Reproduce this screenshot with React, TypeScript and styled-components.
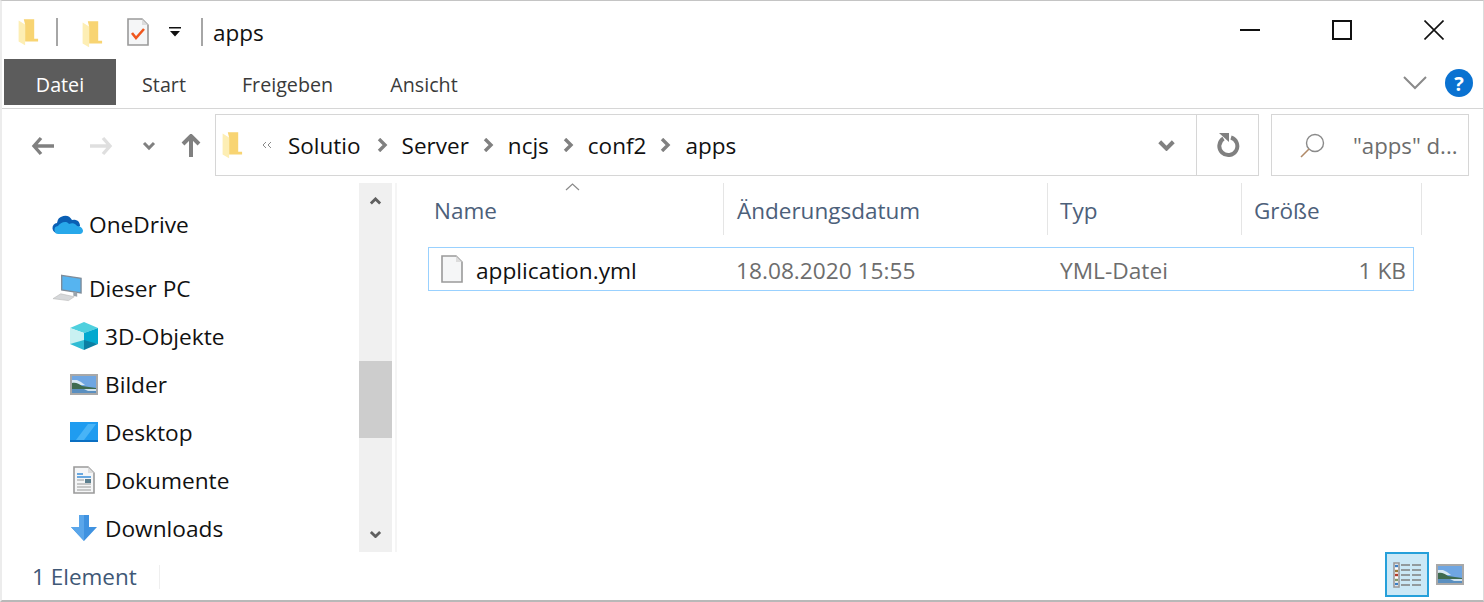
import React from "react";
import styled, { createGlobalStyle } from "styled-components";

const GlobalStyle = createGlobalStyle`
  html, body { margin: 0; padding: 0; background: #fff; }
  body { font-family: "Open Sans", "Noto Sans", sans-serif; }
  * { box-sizing: border-box; }
`;

// Fenster
const Window = styled.div`
  width: 1484px;
  height: 602px;
  background: #fff;
  border-top: 1px solid #c4c4c4;
  border-bottom: 2px solid #b8b8b8;
  border-left: 2px solid #ececec;
  border-right: 1px solid #dcdcdc;
  display: flex;
  flex-direction: column;
  overflow: hidden;
`;

const TitleBar = styled.div`
  height: 57px;
  display: flex;
  align-items: center;
  padding-left: 14px;
  flex-shrink: 0;
`;

const QuickBar = styled.div`
  display: flex;
  align-items: center;
  flex: 1;
  margin-top: 5px;
`;

const VSep = styled.span`
  width: 2px;
  height: 28px;
  background: #a6a6a6;
`;

const Slot = styled.span<{ $w: number; $dy?: number }>`
  width: ${p => p.$w}px;
  display: flex;
  justify-content: center;
  align-items: center;
  padding-top: ${p => p.$dy ?? 0}px;
`;

const TitleText = styled.span`
  font-size: 22.5px;
  color: #111;
  margin-left: 10px;
`;

const WinButtons = styled.div`
  display: flex;
  align-items: center;
  padding-right: 39px;
  gap: 72px;
`;

const TabBar = styled.div`
  height: 51px;
  display: flex;
  align-items: flex-start;
  border-bottom: 1px solid #d6d6d6;
  padding-left: 2px;
  padding-top: 1px;
  flex-shrink: 0;
`;

const Tab = styled.div<{ $active?: boolean; $w: number }>`
  width: ${p => p.$w}px;
  height: 46px;
  display: flex;
  align-items: center;
  justify-content: center;
  padding-top: 4px;
  font-size: 19.7px;
  color: ${p => (p.$active ? "#fff" : "#3a3a3a")};
  background: ${p => (p.$active ? "#5c5c5c" : "transparent")};
`;

const TabEnd = styled.div`
  margin-left: auto;
  height: 46px;
  display: flex;
  align-items: center;
  gap: 18px;
  padding-right: 10px;
  padding-top: 2px;
`;

const HelpDot = styled.span`
  width: 28px;
  height: 28px;
  border-radius: 50%;
  background: #0a72d1;
  color: #fff;
  font-size: 20px;
  font-weight: 700;
  display: flex;
  align-items: center;
  justify-content: center;
`;

const NavBar = styled.div`
  height: 71px;
  display: flex;
  padding-top: 5px;
  flex-shrink: 0;
`;

const NavButtons = styled.div`
  width: 213px;
  height: 64px;
  display: flex;
  align-items: center;
  padding-left: 29px;
`;

const AddressBox = styled.div`
  width: 1044px;
  height: 62px;
  border: 1px solid #d6d6d6;
  display: flex;
  align-items: center;
`;

const Crumbs = styled.div`
  flex: 1;
  display: flex;
  align-items: center;
  padding-left: 4px;
  font-size: 22.5px;
  color: #111;
`;

const Crumb = styled.span<{ $gap?: number }>`
  margin-right: ${p => p.$gap ?? 14}px;
`;

const CrumbArrow = styled.span`
  display: flex;
  margin-right: 14px;
`;

const DropZone = styled.div`
  width: 60px;
  display: flex;
  justify-content: center;
`;

const RefreshZone = styled.div`
  width: 62px;
  height: 100%;
  border-left: 1px solid #d6d6d6;
  display: flex;
  align-items: center;
  justify-content: center;
`;

const SearchBox = styled.div`
  width: 198px;
  height: 62px;
  margin-left: 12px;
  border: 1px solid #d6d6d6;
  display: flex;
  align-items: center;
  padding-left: 28px;
  gap: 28px;
  font-size: 22.2px;
  color: #6d6d6d;
  white-space: nowrap;
`;

const Body = styled.div`
  flex: 1;
  display: flex;
  padding-top: 3px;
  min-height: 0;
`;

const Sidebar = styled.div`
  width: 357px;
  padding: 17px 0 0 48px;
  overflow: hidden;
`;

const NavGroup = styled.div`
  margin-bottom: 16px;
`;

const NavRow = styled.div<{ $child?: boolean }>`
  height: 48px;
  display: flex;
  align-items: center;
  font-size: 22.7px;
  color: #111;
  padding-left: ${p => (p.$child ? 18 : 2)}px;
`;

const NavIcon = styled.span<{ $pad?: number }>`
  width: 37px;
  display: flex;
  align-items: center;
  flex-shrink: 0;
  padding-left: ${p => p.$pad ?? 0}px;
`;

const ScrollBar = styled.div`
  width: 33px;
  background: #f0f0f0;
  display: flex;
  flex-direction: column;
  justify-content: space-between;
  align-items: center;
  position: relative;
`;

const ScrollArrow = styled.div`
  height: 36px;
  display: flex;
  align-items: center;
  justify-content: center;
`;

const ScrollThumb = styled.div`
  position: absolute;
  top: 178px;
  left: 0;
  right: 0;
  height: 77px;
  background: #cdcdcd;
`;

const SideEdge = styled.div`
  width: 2px;
  margin-left: 3px;
  background: #f5f5f5;
`;

const Content = styled.div`
  flex: 1;
  padding-left: 31px;
  position: relative;
`;

const SortArrow = styled.div`
  position: absolute;
  left: 168px;
  top: 0;
  display: flex;
`;

const ColumnHeader = styled.div`
  display: grid;
  grid-template-columns: 296px 324px 194px 180px;
  height: 52px;
`;

const HeadCell = styled.div<{ $pad: number }>`
  display: flex;
  align-items: center;
  padding: 3px 0 0 ${p => p.$pad}px;
  font-size: 22.5px;
  color: #4c607a;
  border-right: 1px solid #e5e5e5;
`;

const FileRow = styled.div`
  margin-top: 12px;
  width: 986px;
  height: 44px;
  border: 1px solid #99d1ff;
  display: grid;
  grid-template-columns: 295px 324px 194px 1fr;
  align-items: center;
  padding-top: 3px;
  font-size: 22.7px;
  color: #6d6d6d;
`;

const FileName = styled.div`
  display: flex;
  align-items: center;
  padding-left: 12px;
  gap: 13px;
  color: #111;
`;

const FileGlyph = styled.span`
  display: flex;
  margin-top: -3px;
`;

const DateCell = styled.div`
  padding-left: 12px;
`;

const SizeCell = styled.div`
  text-align: right;
  padding-right: 7px;
`;

const StatusBar = styled.div`
  height: 48px;
  display: flex;
  align-items: flex-start;
  font-size: 22.5px;
  color: #3f5876;
  padding-left: 30px;
  flex-shrink: 0;
`;

const StatusText = styled.span`
  width: 128px;
  margin-top: 13px;
  border-right: 1px solid #efefef;
  line-height: 24px;
  height: 24px;
  display: flex;
  align-items: center;
`;

const ViewButtons = styled.div`
  margin-left: auto;
  display: flex;
  align-items: center;
  gap: 7px;
  padding-right: 19px;
  height: 45px;
`;

const ViewActive = styled.div`
  width: 44px;
  height: 45px;
  border: 2px solid #26a0da;
  background: #cbe8f6;
  display: flex;
  align-items: center;
  justify-content: center;
`;

const Folder = () => (
  <svg width={26} height={28.6} viewBox="0 0 20 22">
    <path d="M6 1h8v15h3v2H7V5z" fill="#f8d472" />
    <path d="M2 2l5 3v16l-5-3z" fill="#fdeeb4" />
  </svg>
);

const Landscape = () => (
  <svg width={28} height={21} viewBox="0 0 28 21">
    <rect x="1" y="1" width="26" height="19" fill="#6fa6e2" stroke="#a8a8a8" strokeWidth="2" />
    <path d="M2 6h5l4 2 4 3H2z" fill="#d9e9f5" />
    <path d="M2 9c4-1 7 1 10 3l14 2v1H2z" fill="#3f6b4f" />
    <rect x="2" y="15" width="24" height="4" fill="#5a8fc0" />
    <path d="M14 15h12v2H18z" fill="#cfe2ef" />
  </svg>
);

const Chevron = ({ dir, color = "#808080", w = 14 }: { dir: "up" | "down"; color?: string; w?: number }) => (
  <svg width={w} height={w * 0.65} viewBox="0 0 14 9">
    <path
      d={dir === "down" ? "M2 2l5 5 5-5" : "M2 7l5-5 5 5"}
      fill="none"
      stroke={color}
      strokeWidth="3"
    />
  </svg>
);

const BackArrow = ({ color }: { color: string }) => (
  <svg width="24" height="20" viewBox="0 0 24 20">
    <path d="M10 2L3 10l7 8M3 10h20" fill="none" stroke={color} strokeWidth="3.4" />
  </svg>
);

const ForwardArrow = ({ color }: { color: string }) => (
  <svg width="24" height="20" viewBox="0 0 24 20">
    <path d="M14 2l7 8-7 8M21 10H1" fill="none" stroke={color} strokeWidth="3.4" />
  </svg>
);

const CrumbChevron = () => (
  <svg width="11" height="14" viewBox="0 0 11 14">
    <path d="M2 1l6 6-6 6" fill="none" stroke="#808080" strokeWidth="3.4" />
  </svg>
);

const FileIcon = ({ children }: { children?: React.ReactNode }) => (
  <svg width="22" height="28" viewBox="0 0 22 28">
    <path d="M1 1h14l6 6v20H1z" fill="#f5f6f7" stroke="#9a9a9a" strokeWidth="1.6" />
    <path d="M15 1v6h6z" fill="#dcdcdc" />
    {children}
  </svg>
);

const App: React.FC = () => (
  <>
    <GlobalStyle />
    <Window>
      <TitleBar>
        <QuickBar>
          <Slot $w={26}><Folder /></Slot>
          <Slot $w={14} />
          <VSep />
          <Slot $w={22} />
          <Slot $w={26} $dy={4}><Folder /></Slot>
          <Slot $w={21} />
          <Slot $w={22}>
            <FileIcon>
              <path d="M5 15l4 5 8-9" fill="none" stroke="#f0561d" strokeWidth="2.6" />
            </FileIcon>
          </Slot>
          <Slot $w={20} />
          <Slot $w={12}>
            <svg width="12" height="10" viewBox="0 0 12 10">
              <path d="M0 0h12v1.6H0zM1 4h10L6 9.5z" fill="#111" />
            </svg>
          </Slot>
          <Slot $w={20} />
          <VSep />
          <TitleText>apps</TitleText>
        </QuickBar>
        <WinButtons>
          <svg width="20" height="20" viewBox="0 0 20 20"><path d="M0 10h20" stroke="#111" strokeWidth="2" /></svg>
          <svg width="20" height="20" viewBox="0 0 20 20"><rect x="1" y="1" width="18" height="18" fill="none" stroke="#111" strokeWidth="2" /></svg>
          <svg width="20" height="20" viewBox="0 0 20 20"><path d="M0.5 0.5l19 19M19.5 0.5l-19 19" stroke="#111" strokeWidth="1.6" /></svg>
        </WinButtons>
      </TitleBar>

      <TabBar>
        <Tab $active $w={112}>Datei</Tab>
        <Tab $w={96}>Start</Tab>
        <Tab $w={151}>Freigeben</Tab>
        <Tab $w={122}>Ansicht</Tab>
        <TabEnd>
          <svg width="24" height="14" viewBox="0 0 24 14">
            <path d="M1 1l11 11L23 1" fill="none" stroke="#8a8a8a" strokeWidth="2" />
          </svg>
          <HelpDot>?</HelpDot>
        </TabEnd>
      </TabBar>

      <NavBar>
        <NavButtons>
          <BackArrow color="#808080" />
          <Slot $w={34} />
          <ForwardArrow color="#dfdfdf" />
          <Slot $w={29} />
          <Chevron dir="down" />
          <Slot $w={25} />
          <svg width="20" height="24" viewBox="0 0 20 24">
            <path d="M10 23V3M2 10l8-8 8 8" fill="none" stroke="#808080" strokeWidth="4" />
          </svg>
        </NavButtons>
        <AddressBox>
          <Crumbs>
            <Folder />
            <Slot $w={16} />
            <svg width="10" height="8" viewBox="0 0 10 8">
              <path d="M4 1L1 4l3 3M9 1L6 4l3 3" fill="none" stroke="#8a8a8a" strokeWidth="1" />
            </svg>
            <Slot $w={16} />
            <Crumb $gap={16}>Solutio</Crumb>
            <CrumbArrow><CrumbChevron /></CrumbArrow>
            <Crumb>Server</Crumb>
            <CrumbArrow><CrumbChevron /></CrumbArrow>
            <Crumb>ncjs</Crumb>
            <CrumbArrow><CrumbChevron /></CrumbArrow>
            <Crumb>conf2</Crumb>
            <CrumbArrow><CrumbChevron /></CrumbArrow>
            <Crumb>apps</Crumb>
          </Crumbs>
          <DropZone><Chevron dir="down" w={19} /></DropZone>
          <RefreshZone>
            <svg width="24" height="26" viewBox="0 0 24 26">
              <path d="M15 5.5A9 9 0 1 1 7.5 6.5" fill="none" stroke="#808080" strokeWidth="4" />
              <path d="M3 1h10v9z" fill="#808080" />
            </svg>
          </RefreshZone>
        </AddressBox>
        <SearchBox>
          <svg width="25" height="25" viewBox="0 0 25 25">
            <circle cx="15" cy="10" r="8.5" fill="none" stroke="#8a8a8a" strokeWidth="1.4" />
            <path d="M9 16L1 24" stroke="#b08a68" strokeWidth="1.6" />
          </svg>
          <span>"apps" d...</span>
        </SearchBox>
      </NavBar>

      <Body>
        <Sidebar>
          <NavGroup>
            <NavRow>
              <NavIcon>
                <svg width="32" height="22" viewBox="0 0 32 22">
                  <path d="M6 20a5 5 0 0 1-1-10 8 8 0 0 1 15-3 6 6 0 0 1 8 6l-8 7z" fill="#0a5fb4" />
                  <path d="M7 21a4 4 0 0 1-1-8c2-3 8-6 11-2 4-2 7 0 8 2 4 0 6 3 6 5s-2 3-3 3z" fill="#28a8ea" />
                </svg>
              </NavIcon>
              OneDrive
            </NavRow>
          </NavGroup>
          <NavGroup>
            <NavRow>
              <NavIcon>
                <svg width="31" height="28" viewBox="0 0 32 28">
                  <path d="M10 1l20 3v15L10 16z" fill="#56b4f0" stroke="#7f8c99" strokeWidth="1.4" />
                  <path d="M22 18l4 1v4l-4-1z" fill="#9aa3ab" />
                  <path d="M1 25l8-5 14 3-6 4z" fill="#d6d8da" stroke="#b8b8b8" strokeWidth="0.6" />
                </svg>
              </NavIcon>
              Dieser PC
            </NavRow>
            <NavRow $child>
              <NavIcon $pad={2}>
                <svg width="28" height="28" viewBox="0 0 28 28">
                  <path d="M14 0l14 6-14 5L0 6z" fill="#4fd0de" />
                  <path d="M0 6l14 5v9L0 22z" fill="#c9f1f2" />
                  <path d="M14 11l14-5v16l-14-2z" fill="#02a9cf" />
                  <path d="M0 22l14-4v10z" fill="#30bcd4" />
                  <path d="M28 22l-14-4v10z" fill="#0b7fa3" />
                </svg>
              </NavIcon>
              3D-Objekte
            </NavRow>
            <NavRow $child>
              <NavIcon $pad={2}><Landscape /></NavIcon>
              Bilder
            </NavRow>
            <NavRow $child>
              <NavIcon $pad={2}>
                <svg width="28" height="20" viewBox="0 0 28 20">
                  <rect width="28" height="20" fill="#1f9cf0" />
                  <path d="M6 18L18 2h8L14 18z" fill="#48b4f7" />
                  <rect y="18" width="28" height="2" fill="#0a6fc2" />
                </svg>
              </NavIcon>
              Desktop
            </NavRow>
            <NavRow $child>
              <NavIcon $pad={5}>
                <FileIcon>
                  <path d="M4 8h6M4 11h14" stroke="#3b8fd9" strokeWidth="1.4" />
                  <path d="M4 14h7M4 18h14M4 21h14M4 24h14" stroke="#9a9a9a" strokeWidth="1.2" />
                  <rect x="12" y="13" width="6" height="4" fill="#5b7f8f" />
                </FileIcon>
              </NavIcon>
              Dokumente
            </NavRow>
            <NavRow $child>
              <NavIcon $pad={3}>
                <svg width="26" height="26" viewBox="0 0 26 26">
                  <path d="M8 0h10v12h8L13 26 0 12h8z" fill="#3f92e0" />
                  <path d="M8 0h5v26L0 12h8z" fill="#5aa6ea" />
                </svg>
              </NavIcon>
              Downloads
            </NavRow>
          </NavGroup>
        </Sidebar>
        <ScrollBar>
          <ScrollArrow><Chevron dir="up" color="#606060" w={13} /></ScrollArrow>
          <ScrollThumb />
          <ScrollArrow><Chevron dir="down" color="#606060" w={13} /></ScrollArrow>
        </ScrollBar>
        <SideEdge />
        <Content>
          <SortArrow>
            <svg width="15" height="8" viewBox="0 0 15 8">
              <path d="M1 7l6.5-6L14 7" fill="none" stroke="#8a8a8a" strokeWidth="1.2" />
            </svg>
          </SortArrow>
          <ColumnHeader>
            <HeadCell $pad={6}>Name</HeadCell>
            <HeadCell $pad={13}>Änderungsdatum</HeadCell>
            <HeadCell $pad={12}>Typ</HeadCell>
            <HeadCell $pad={12}>Größe</HeadCell>
          </ColumnHeader>
          <FileRow>
            <FileName>
              <FileGlyph><FileIcon /></FileGlyph>
              application.yml
            </FileName>
            <DateCell>18.08.2020 15:55</DateCell>
            <DateCell>YML-Datei</DateCell>
            <SizeCell>1 KB</SizeCell>
          </FileRow>
        </Content>
      </Body>

      <StatusBar>
        <StatusText>1 Element</StatusText>
        <ViewButtons>
          <ViewActive>
            <svg width="28" height="26" viewBox="0 0 28 26">
              <rect x="1" y="1" width="5" height="24" fill="#fff" stroke="#9a9a9a" strokeWidth="1.6" />
              <path d="M2 4h3" stroke="#3b7fc4" strokeWidth="2.4" />
              <path d="M2 9h3" stroke="#9a7b3c" strokeWidth="2.4" />
              <path d="M2 13h3" stroke="#b33c2a" strokeWidth="2.4" />
              <path d="M2 18h3" stroke="#7f9a6c" strokeWidth="2.4" />
              <path d="M2 22h3" stroke="#3b7fc4" strokeWidth="2.4" />
              <path d="M8 3h9M19 3h9M8 8h9M19 8h9M8 13h9M19 13h9M8 18h9M19 18h9M8 23h9M19 23h9" stroke="#808080" strokeWidth="1.4" />
            </svg>
          </ViewActive>
          <Landscape />
        </ViewButtons>
      </StatusBar>
    </Window>
  </>
);

export default App;
